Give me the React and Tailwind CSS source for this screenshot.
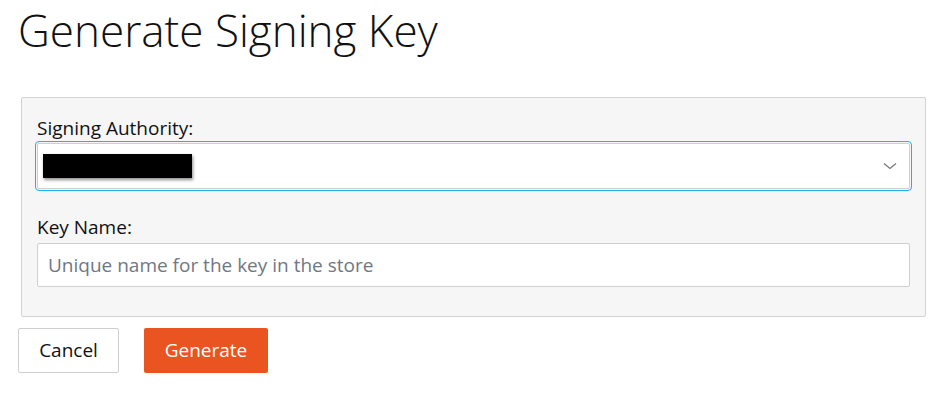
import React, { useState } from 'react'

function ChevronDown() {
  return (
    <svg width="14" height="8" viewBox="0 0 14 8" fill="none" className="text-[#777]">
      <path d="M1 1.5 L7 6.5 L13 1.5" stroke="currentColor" strokeWidth="1.3" />
    </svg>
  )
}

export default function App() {
  const [keyName, setKeyName] = useState('')

  return (
    <div className="w-[938px] h-[399px] bg-white pl-[18px] font-['Open_Sans',sans-serif] text-[#111]">
      <h1 className="mt-[8px] text-[44px] leading-[44px] font-light">
        Generate Signing Key
      </h1>

      <div className="mt-[45px] ml-[3px] w-[905px] bg-[#f6f6f6] border border-[#d3d3d3] rounded-[2px] px-[15px] pt-[18px] pb-[29px]">
        <label className="block text-[19px] leading-[24px]">Signing Authority:</label>
        <div className="mt-[3px] h-[46px] bg-white border border-[#cfcfcf] rounded-[2px] outline-1 outline-offset-1 outline-[#1ab3ec] flex items-center justify-between pl-[5px] pr-[12px]">
          <div className="w-[149px] h-[24px] bg-black shadow-[1px_2px_3px_rgba(0,0,0,0.45)]"></div>
          <ChevronDown />
        </div>

        <label className="block mt-[26px] text-[19px] leading-[24px]">Key Name:</label>
        <input
          value={keyName}
          onChange={(e) => setKeyName(e.target.value)}
          className="mt-[4px] w-full h-[44px] bg-white border border-[#cfcfcf] rounded-[2px] px-[10px] text-[19px] placeholder:text-[#6f7785] outline-none"
          type="text"
          placeholder="Unique name for the key in the store"
        />
      </div>

      <div className="mt-[11px] flex gap-[25px]">
        <button className="w-[101px] h-[45px] bg-white border border-[#cfcfcf] rounded-[2px] text-[19px] text-[#111]">
          Cancel
        </button>
        <button className="w-[124px] h-[45px] bg-[#e95420] rounded-[2px] text-[19px] text-white">
          Generate
        </button>
      </div>
    </div>
  )
}
